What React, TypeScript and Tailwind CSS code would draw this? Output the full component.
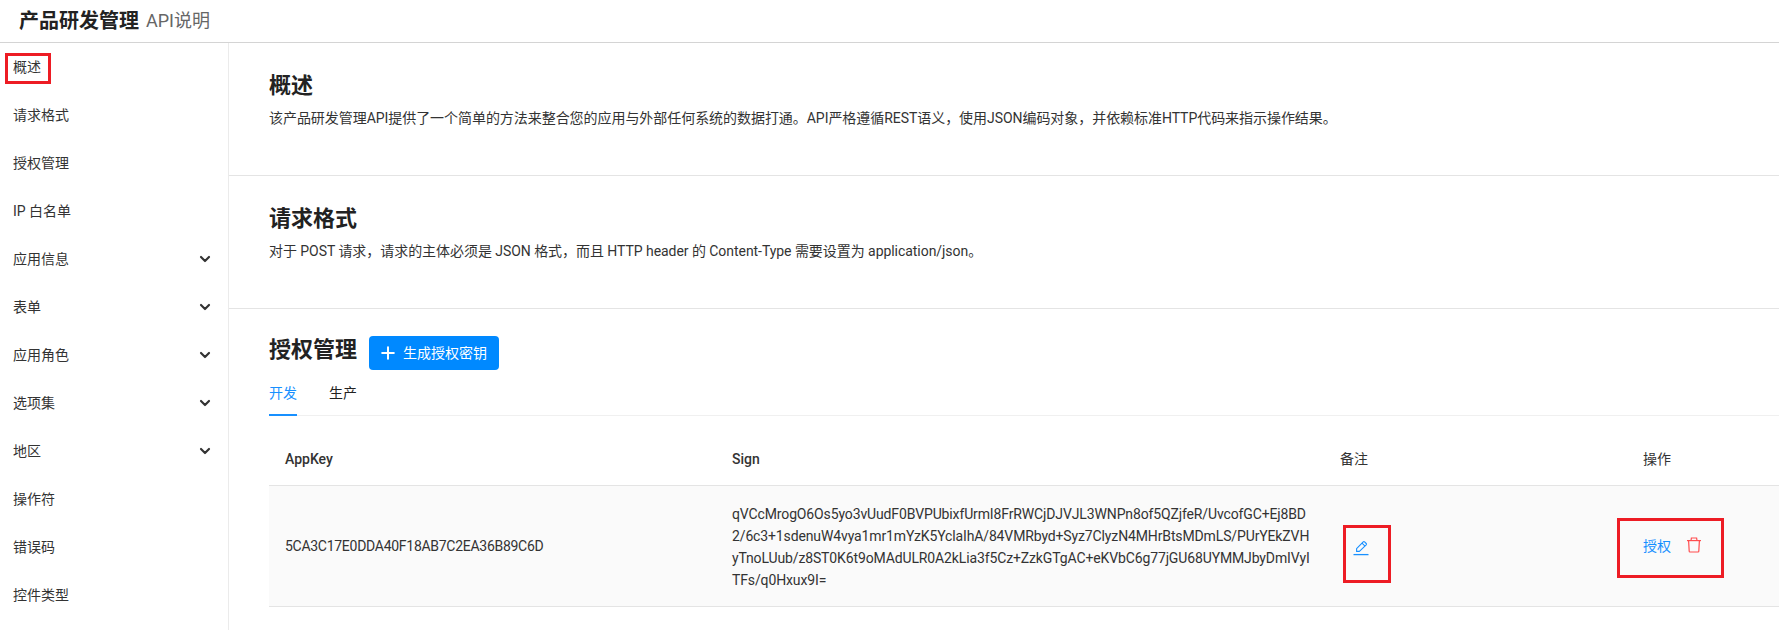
import { ChevronDown, Plus } from 'lucide-react';

const navItems = [
  { label: '概述' },
  { label: '请求格式' },
  { label: '授权管理' },
  { label: 'IP 白名单' },
  { label: '应用信息', sub: true },
  { label: '表单', sub: true },
  { label: '应用角色', sub: true },
  { label: '选项集', sub: true },
  { label: '地区', sub: true },
  { label: '操作符' },
  { label: '错误码' },
  { label: '控件类型' },
];

const signLines = [
  'qVCcMrogO6Os5yo3vUudF0BVPUbixfUrmI8FrRWCjDJVJL3WNPn8of5QZjfeR/UvcofGC+Ej8BD',
  '2/6c3+1sdenuW4vya1mr1mYzK5YclaIhA/84VMRbyd+Syz7ClyzN4MHrBtsMDmLS/PUrYEkZVH',
  'yTnoLUub/z8ST0K6t9oMAdULR0A2kLia3f5Cz+ZzkGTgAC+eKVbC6g77jGU68UYMMJbyDmIVyI',
  'TFs/q0Hxux9I=',
];

const redBox = 'absolute border-[3px] border-[#ed1c24]';

function EditIcon() {
  return (
    <svg className="mt-[4px]" width="16" height="16" viewBox="0 0 16 16" fill="none" stroke="#1890ff" strokeWidth="1.1">
      <path d="M3.6 11.4V8.6l6.6-6.7a1 1 0 0 1 1.4 0l1.6 1.6a1 1 0 0 1 0 1.4L6.4 11.4H3.6Z" strokeLinejoin="round" />
      <path d="M9 3.1l3 3" />
      <path d="M.5 14.6h15" strokeWidth="1.3" />
    </svg>
  );
}

function TrashIcon() {
  return (
    <svg className="-mt-[2px]" width="16" height="16" viewBox="0 0 16 16" fill="none" stroke="#ff4d4f" strokeWidth="1.2">
      <path d="M1 3.6h14" />
      <path d="M5 3.6 5.4 1h5.2l.4 2.6" />
      <path d="M2.6 3.6 3.2 14.2a.8.8 0 0 0 .8.8h8a.8.8 0 0 0 .8-.8l.6-10.6" />
    </svg>
  );
}

export default function App() {
  return (
    <div className="relative flex h-[630px] w-[1779px] flex-col overflow-hidden bg-white font-['Roboto','Noto_Sans_CJK_SC',sans-serif] text-sm text-[#333]">
      {/* top bar */}
      <header className="flex h-[43px] shrink-0 items-center border-b border-[#d4d4d4] pl-[19px]">
        <span className="text-xl leading-none font-bold text-[#222]">产品研发管理</span>
        <span className="ml-[7px] text-lg leading-none text-[#666]">API说明</span>
      </header>

      <div className="flex min-h-0 flex-1">
        <nav className="w-[229px] shrink-0 border-r border-[#ebebeb]">
          {navItems.map((item) => (
            <div key={item.label} className="flex h-[48px] items-center justify-between pr-[15px] pl-[13px]">
              <span>{item.label}</span>
              {item.sub && <ChevronDown size={16} strokeWidth={3.2} className="text-[#333]" />}
            </div>
          ))}
        </nav>

        <main className="min-w-0 flex-1">
          <section className="h-[133px] border-b border-[#e4e4e4] pt-[28px] pl-[40px]">
            <h2 className="text-[22px] leading-[30px] font-bold text-[#222]">概述</h2>
            <p className="mt-[2px] leading-[30px] tracking-[-0.05px]">
              该产品研发管理API提供了一个简单的方法来整合您的应用与外部任何系统的数据打通。API严格遵循REST语义，使用JSON编码对象，并依赖标准HTTP代码来指示操作结果。
            </p>
          </section>
          <section className="h-[133px] border-b border-[#e4e4e4] pt-[28px] pl-[40px]">
            <h2 className="text-[22px] leading-[30px] font-bold text-[#222]">请求格式</h2>
            <p className="mt-[2px] leading-[30px] tracking-[-0.05px]">
              对于 POST 请求，请求的主体必须是 JSON 格式，而且 HTTP header 的 Content-Type 需要设置为 application/json。
            </p>
          </section>

          <section className="pt-[27px] pl-[40px]">
            <div className="flex h-[34px] items-center gap-[12px]">
              <h2 className="mb-[6px] text-[22px] leading-[30px] font-bold text-[#222]">授权管理</h2>
              <button className="flex h-[34px] w-[130px] items-center gap-[5px] rounded-[4px] bg-[#0089ff] pl-[9px] text-white">
                <Plus size={20} strokeWidth={2.4} />
                <span>生成授权密钥</span>
              </button>
            </div>

            <div className="mt-[11px] flex h-[35px] gap-[32px] border-b border-[#f0f0f0]">
              <div className="h-[35px] border-b-2 border-[#1890ff] pt-[2px] text-[#1890ff]">开发</div>
              <div className="pt-[2px] text-[#222]">生产</div>
            </div>

            <div className="mt-[16px] grid grid-cols-[447px_608px_303px_1fr]">
              <div className="flex h-[54px] items-center border-b border-[#e4e4e4] pl-[16px] font-medium">AppKey</div>
              <div className="flex h-[54px] items-center border-b border-[#e4e4e4] pl-[16px] font-medium">Sign</div>
              <div className="flex h-[54px] items-center border-b border-[#e4e4e4] pl-[16px]">备注</div>
              <div className="flex h-[54px] items-center border-b border-[#e4e4e4] pl-[16px]">操作</div>

              <div className="flex h-[121px] items-center border-b border-[#e4e4e4] bg-[#fafafa] pl-[16px] tracking-[-0.28px]">
                5CA3C17E0DDA40F18AB7C2EA36B89C6D
              </div>
              <div className="flex h-[121px] min-w-0 flex-col justify-center border-b border-[#e4e4e4] bg-[#fafafa] pt-[1px] pl-[16px] leading-[22px] tracking-[-0.13px]">
                {signLines.map((line) => (
                  <span key={line} className="whitespace-nowrap">{line}</span>
                ))}
              </div>
              <div className="flex h-[121px] items-center border-b border-[#e4e4e4] bg-[#fafafa] pl-[29px]">
                <EditIcon />
              </div>
              <div className="flex h-[121px] items-center gap-[15px] border-b border-[#e4e4e4] bg-[#fafafa] pl-[16px]">
                <span className="text-[#1890ff]">授权</span>
                <TrashIcon />
              </div>
            </div>
          </section>
        </main>
      </div>

      {/* red annotation boxes drawn over the screenshot */}
      <div className={`${redBox} top-[53px] left-[5px] h-[31px] w-[46px]`} />
      <div className={`${redBox} top-[525px] left-[1343px] h-[58px] w-[48px]`} />
      <div className={`${redBox} top-[518px] left-[1617px] h-[60px] w-[107px]`} />
    </div>
  );
}
